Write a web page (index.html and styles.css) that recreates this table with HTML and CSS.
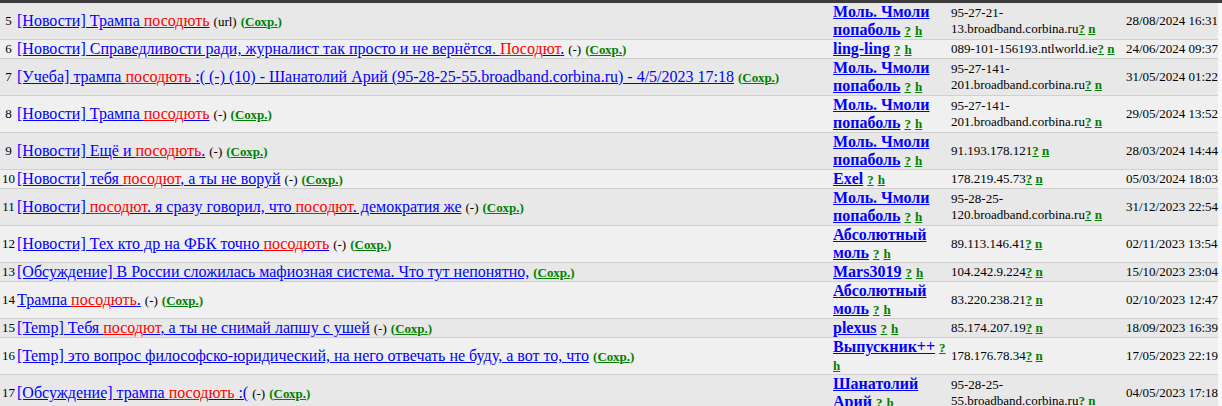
FILE: index.html
```html
<!DOCTYPE html>
<html lang="ru">
<head>
<meta charset="utf-8">
<title>Поиск</title>
<link rel="stylesheet" href="styles.css">
</head>
<body>
<div class="topbar"></div>
<table class="list">
<colgroup>
<col class="c-num"><col class="c-title"><col class="c-name"><col class="c-ip"><col class="c-date">
</colgroup>
<tbody>
<tr>
<td class="num">5</td>
<td class="title"><a class="t" href="#">[Новости] Трампа <span class="hl">посод</span><span class="r">ють</span></a> <span class="meta">(url)</span> <span class="sv">(<a href="#">Сохр.</a>)</span></td>
<td class="name"><a class="nm" href="#">Моль. Чмоли попаболь</a> <a class="q" href="#">?</a> <a class="q" href="#">h</a></td>
<td class="ip">95-27-21-<wbr>13.broadband.corbina.ru<a class="q" href="#">?</a> <a class="q" href="#">n</a></td>
<td class="date">28/08/2024 16:31</td>
</tr>
<tr>
<td class="num">6</td>
<td class="title"><a class="t" href="#">[Новости] Справедливости ради, журналист так просто и не вернётся. <span class="hl">Посод</span><span class="r">ют</span>.</a> <span class="meta">(-)</span> <span class="sv">(<a href="#">Сохр.</a>)</span></td>
<td class="name"><a class="nm" href="#">ling-ling</a> <a class="q" href="#">?</a> <a class="q" href="#">h</a></td>
<td class="ip">089-101-156193.ntlworld.ie<a class="q" href="#">?</a> <a class="q" href="#">n</a></td>
<td class="date">24/06/2024 09:37</td>
</tr>
<tr>
<td class="num">7</td>
<td class="title"><a class="t" href="#">[Учеба] трампа <span class="hl">посод</span><span class="r">ють</span> :( (-) (10) - Шанатолий Арий (95-28-25-55.broadband.corbina.ru) - 4/5/2023 17:18</a> <span class="sv">(<a href="#">Сохр.</a>)</span></td>
<td class="name"><a class="nm" href="#">Моль. Чмоли попаболь</a> <a class="q" href="#">?</a> <a class="q" href="#">h</a></td>
<td class="ip">95-27-141-<wbr>201.broadband.corbina.ru<a class="q" href="#">?</a> <a class="q" href="#">n</a></td>
<td class="date">31/05/2024 01:22</td>
</tr>
<tr>
<td class="num">8</td>
<td class="title"><a class="t" href="#">[Новости] Трампа <span class="hl">посод</span><span class="r">ють</span></a> <span class="meta">(-)</span> <span class="sv">(<a href="#">Сохр.</a>)</span></td>
<td class="name"><a class="nm" href="#">Моль. Чмоли попаболь</a> <a class="q" href="#">?</a> <a class="q" href="#">h</a></td>
<td class="ip">95-27-141-<wbr>201.broadband.corbina.ru<a class="q" href="#">?</a> <a class="q" href="#">n</a></td>
<td class="date">29/05/2024 13:52</td>
</tr>
<tr>
<td class="num">9</td>
<td class="title"><a class="t" href="#">[Новости] Ещё и <span class="hl">посод</span><span class="r">ють</span>.</a> <span class="meta">(-)</span> <span class="sv">(<a href="#">Сохр.</a>)</span></td>
<td class="name"><a class="nm" href="#">Моль. Чмоли попаболь</a> <a class="q" href="#">?</a> <a class="q" href="#">h</a></td>
<td class="ip">91.193.178.121<a class="q" href="#">?</a> <a class="q" href="#">n</a></td>
<td class="date">28/03/2024 14:44</td>
</tr>
<tr>
<td class="num">10</td>
<td class="title"><a class="t" href="#">[Новости] тебя <span class="hl">посод</span><span class="r">ют</span>, а ты не воруй</a> <span class="meta">(-)</span> <span class="sv">(<a href="#">Сохр.</a>)</span></td>
<td class="name"><a class="nm" href="#">Exel</a> <a class="q" href="#">?</a> <a class="q" href="#">h</a></td>
<td class="ip">178.219.45.73<a class="q" href="#">?</a> <a class="q" href="#">n</a></td>
<td class="date">05/03/2024 18:03</td>
</tr>
<tr>
<td class="num">11</td>
<td class="title"><a class="t" href="#">[Новости] <span class="hl">посод</span><span class="r">ют</span>. я сразу говорил, что <span class="hl">посод</span><span class="r">ют</span>. демократия же</a> <span class="meta">(-)</span> <span class="sv">(<a href="#">Сохр.</a>)</span></td>
<td class="name"><a class="nm" href="#">Моль. Чмоли попаболь</a> <a class="q" href="#">?</a> <a class="q" href="#">h</a></td>
<td class="ip">95-28-25-<wbr>120.broadband.corbina.ru<a class="q" href="#">?</a> <a class="q" href="#">n</a></td>
<td class="date">31/12/2023 22:54</td>
</tr>
<tr>
<td class="num">12</td>
<td class="title"><a class="t" href="#">[Новости] Тех кто др на ФБК точно <span class="hl">посод</span><span class="r">ють</span></a> <span class="meta">(-)</span> <span class="sv">(<a href="#">Сохр.</a>)</span></td>
<td class="name"><a class="nm" href="#">Абсолютный моль</a> <a class="q" href="#">?</a> <a class="q" href="#">h</a></td>
<td class="ip">89.113.146.41<a class="q" href="#">?</a> <a class="q" href="#">n</a></td>
<td class="date">02/11/2023 13:54</td>
</tr>
<tr>
<td class="num">13</td>
<td class="title"><a class="t" href="#">[Обсуждение] В России сложилась мафиозная система. Что тут непонятно,</a> <span class="sv">(<a href="#">Сохр.</a>)</span></td>
<td class="name"><a class="nm" href="#">Mars3019</a> <a class="q" href="#">?</a> <a class="q" href="#">h</a></td>
<td class="ip">104.242.9.224<a class="q" href="#">?</a> <a class="q" href="#">n</a></td>
<td class="date">15/10/2023 23:04</td>
</tr>
<tr>
<td class="num">14</td>
<td class="title"><a class="t" href="#">Трампа <span class="hl">посод</span><span class="r">ють</span>.</a> <span class="meta">(-)</span> <span class="sv">(<a href="#">Сохр.</a>)</span></td>
<td class="name"><a class="nm" href="#">Абсолютный моль</a> <a class="q" href="#">?</a> <a class="q" href="#">h</a></td>
<td class="ip">83.220.238.21<a class="q" href="#">?</a> <a class="q" href="#">n</a></td>
<td class="date">02/10/2023 12:47</td>
</tr>
<tr>
<td class="num">15</td>
<td class="title"><a class="t" href="#">[Temp] Тебя <span class="hl">посод</span><span class="r">ют</span>, а ты не снимай лапшу с ушей</a> <span class="meta">(-)</span> <span class="sv">(<a href="#">Сохр.</a>)</span></td>
<td class="name"><a class="nm" href="#">plexus</a> <a class="q" href="#">?</a> <a class="q" href="#">h</a></td>
<td class="ip">85.174.207.19<a class="q" href="#">?</a> <a class="q" href="#">n</a></td>
<td class="date">18/09/2023 16:39</td>
</tr>
<tr>
<td class="num">16</td>
<td class="title"><a class="t" href="#">[Temp] это вопрос философско-юридический, на него отвечать не буду, а вот то, что</a> <span class="sv">(<a href="#">Сохр.</a>)</span></td>
<td class="name"><a class="nm" href="#">Выпускник++</a> <a class="q" href="#">?</a> <a class="q" href="#">h</a></td>
<td class="ip">178.176.78.34<a class="q" href="#">?</a> <a class="q" href="#">n</a></td>
<td class="date">17/05/2023 22:19</td>
</tr>
<tr>
<td class="num">17</td>
<td class="title"><a class="t" href="#">[Обсуждение] трампа <span class="hl">посод</span><span class="r">ють</span> :(</a> <span class="meta">(-)</span> <span class="sv">(<a href="#">Сохр.</a>)</span></td>
<td class="name"><a class="nm" href="#">Шанатолий Арий</a> <a class="q" href="#">?</a> <a class="q" href="#">h</a></td>
<td class="ip">95-28-25-<wbr>55.broadband.corbina.ru<a class="q" href="#">?</a> <a class="q" href="#">n</a></td>
<td class="date">04/05/2023 17:18</td>
</tr>
</tbody>
</table>
</body>
</html>
```

FILE: styles.css
```css
html, body {
  margin: 0;
  padding: 0;
}
body {
  background: #f8f8f8;
  font-family: "Liberation Serif", "Times New Roman", serif;
  font-size: 16px;
  color: #000;
  overflow: hidden;
}
.topbar {
  height: 3px;
  background: #3c3c3c;
}
.list {
  width: 1218px;
  table-layout: fixed;
  border-collapse: collapse;
}
.c-num { width: 17px; }
.c-title { width: 814px; }
.c-name { width: 118px; }
.c-ip { width: 175px; }
.c-date { width: 94px; }

.list td {
  padding: 0;
  vertical-align: middle;
  border-bottom: 1px solid #d0d0d0;
}
.list tr:nth-child(odd) td { background: #e8e8e8; }
.list tr:nth-child(even) td { background: #f0f0f0; }

.num {
  font-size: 13px;
  text-align: center;
}
.title {
  white-space: nowrap;
  overflow: hidden;
}
.t {
  color: #0000ff;
  text-decoration: underline;
}
.hl {
  color: #ff0000;
  text-decoration: underline;
}
.r {
  color: #ff0000;
}
.meta {
  font-size: 13px;
}
.sv {
  font-size: 13px;
  font-weight: bold;
  color: #008000;
}
.sv a {
  color: #008000;
}
.list td.name {
  padding-left: 2px;
}
.nm {
  color: #0000ff;
  font-weight: bold;
}
.q {
  color: #008000;
  font-weight: bold;
  font-size: 13px;
}
.list td.ip {
  padding-left: 2px;
  font-size: 13px;
}
.list td.date {
  padding-left: 2px;
  font-size: 13px;
  white-space: nowrap;
}
```
